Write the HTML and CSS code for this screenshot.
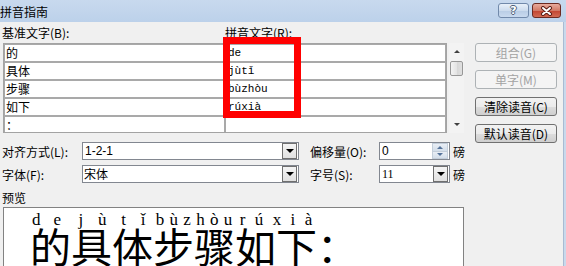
FILE: index.html
```html
<!DOCTYPE html>
<html lang="zh-CN">
<head>
    <meta charset="UTF-8">
    <title>拼音指南</title>
    <link rel="stylesheet" href="styles.css">
</head>
<body>
    <div class="window">
        <div class="titlebar">
            <span class="title">拼音指南</span>
            <div class="caption-buttons">
                <div class="cap-btn help"><span>?</span></div>
                <div class="cap-btn close">
                    <svg width="13" height="10" viewBox="0 0 13 10">
                        <path d="M3 2 L10 8 M10 2 L3 8" stroke="#5b1e17" stroke-width="4" stroke-linecap="round"/>
                        <path d="M3 2 L10 8 M10 2 L3 8" stroke="#ffffff" stroke-width="2" stroke-linecap="round"/>
                    </svg>
                </div>
            </div>
        </div>

        <div class="client">
            <div class="dialog">
                <div class="top">
                    <div class="labels">
                        <span class="lbl base-lbl">基准文字(B):</span>
                        <span class="lbl">拼音文字(R):</span>
                    </div>

                    <div class="table-wrap">
                        <div class="cells">
                            <div class="cell">的</div><div class="cell py">de</div>
                            <div class="cell">具体</div><div class="cell py">jùtǐ</div>
                            <div class="cell">步骤</div><div class="cell py">bùzhòu</div>
                            <div class="cell">如下</div><div class="cell py">rúxià</div>
                            <div class="cell last">：</div><div class="cell py last"></div>
                        </div>
                        <div class="scrollbar">
                            <div class="sb-btn"><span class="arrow-up"></span></div>
                            <div class="sb-thumb"></div>
                            <div class="sb-track"></div>
                            <div class="sb-btn"><span class="arrow-down"></span></div>
                        </div>
                    </div>

                    <div class="side-buttons">
                        <div class="btn disabled">组合(G)</div>
                        <div class="btn disabled">单字(M)</div>
                        <div class="btn">清除读音(C)</div>
                        <div class="btn">默认读音(D)</div>
                    </div>
                </div>

                <div class="form-row">
                    <span class="lbl field-lbl">对齐方式(L):</span>
                    <div class="combo wide">
                        <span class="combo-text">1-2-1</span>
                        <span class="drop"><span class="arrow-down"></span></span>
                    </div>
                    <span class="lbl field-lbl2">偏移量(O):</span>
                    <div class="combo small">
                        <span class="combo-text">0</span>
                        <span class="spin">
                            <span class="spin-half"><span class="spin-up"></span></span>
                            <span class="spin-half"><span class="spin-down"></span></span>
                        </span>
                    </div>
                    <span class="unit">磅</span>
                </div>

                <div class="form-row second">
                    <span class="lbl field-lbl">字体(F):</span>
                    <div class="combo wide">
                        <span class="combo-text cjk">宋体</span>
                        <span class="drop"><span class="arrow-down"></span></span>
                    </div>
                    <span class="lbl field-lbl2">字号(S):</span>
                    <div class="combo small">
                        <span class="combo-text serif">11</span>
                        <span class="drop"><span class="arrow-down"></span></span>
                    </div>
                    <span class="unit">磅</span>
                </div>

                <div class="preview-lbl">预览</div>
                <div class="preview">
                    <div class="ruby">
                        <div class="rt single"><span>d</span><span>e</span></div>
                        <div class="rb">的</div>
                    </div>
                    <div class="ruby">
                        <div class="rt"><span>j</span><span>ù</span><span>t</span><span>ǐ</span></div>
                        <div class="rb">具体</div>
                    </div>
                    <div class="ruby">
                        <div class="rt"><span>b</span><span>ù</span><span>z</span><span>h</span><span>ò</span><span>u</span></div>
                        <div class="rb">步骤</div>
                    </div>
                    <div class="ruby">
                        <div class="rt"><span>r</span><span>ú</span><span>x</span><span>i</span><span>à</span></div>
                        <div class="rb">如下</div>
                    </div>
                    <div class="ruby">
                        <div class="rt"></div>
                        <div class="rb">：</div>
                    </div>
                </div>
            </div>
            <div class="frame"></div>
        </div>

        <!-- red annotation box drawn over the pinyin column -->
        <div class="highlight"></div>
    </div>
</body>
</html>
```

FILE: styles.css
```css
body {
    margin: 0;
    font-family: "Noto Sans CJK SC", sans-serif;
    font-size: 12px;
    color: #000;
    background: #f0f0f0;
    overflow: hidden;
}
.window {
    position: relative;
    width: 566px;
    height: 266px;
    overflow: hidden;
}
.titlebar {
    height: 22px;
    display: flex;
    justify-content: space-between;
    background: linear-gradient(#c8d9ee, #bcd1ea);
}
.title {
    line-height: 22px;
    padding-top: 1px;
}
.caption-buttons {
    display: flex;
    gap: 3px;
    padding: 3px 5px 0 0;
}
.cap-btn {
    height: 13px;
    border-radius: 3px;
    display: flex;
    align-items: center;
    justify-content: center;
}
.help {
    width: 29px;
    border: 1px solid #7189aa;
    background: linear-gradient(#e8f0f9, #cddcee 50%, #b8cce5 51%, #c9daef);
}
.help span {
    font-family: "DejaVu Sans", sans-serif;
    font-weight: bold;
    font-size: 11px;
    line-height: 13px;
    color: #fff;
    text-shadow: 1px 0 0 #4d5f78, -1px 0 0 #4d5f78, 0 1px 0 #4d5f78, 0 -1px 0 #4d5f78;
}
.close {
    width: 27px;
    border: 1px solid #6b2a22;
    background: linear-gradient(#e8ab9d, #d27a67 50%, #c2432f 51%, #d16a52);
}
.client {
    display: flex;
    height: 244px;
}
.dialog {
    flex: 1;
    padding-left: 3px;
    overflow: hidden;
}
.frame {
    width: 2px;
    border-left: 1px solid #a9bbd2;
    background: #c9d9ec;
}
.top {
    display: grid;
    grid-template-columns: 461px 82px;
    grid-template-rows: 21px 90px;
    column-gap: 11px;
}
.labels {
    grid-column: 1 / 3;
    display: flex;
    line-height: 21px;
    margin-left: -1px;
}
.base-lbl {
    width: 223px;
}
.table-wrap {
    display: flex;
    gap: 2px;
}
.cells {
    width: 442px;
    border: 1px solid #a3a3a3;
    display: grid;
    grid-template-columns: 221px 221px;
    grid-template-rows: 18px 18px 18px 18px 16px;
    background: #fff;
    overflow: hidden;
}
.cell {
    border: 1px solid #a9a9a9;
    background: #fff;
    font-size: 12px;
    line-height: 16px;
    padding-left: 1px;
    white-space: nowrap;
}
.cell.last {
    border-bottom: none;
}
.cell.py {
    font-family: "Liberation Mono", monospace;
    font-size: 11px;
    padding-left: 2px;
}
.scrollbar {
    width: 15px;
    display: flex;
    flex-direction: column;
    background: #f3f3f3;
}
.sb-btn {
    height: 17px;
    display: flex;
    align-items: center;
    justify-content: center;
}
.sb-thumb {
    height: 13px;
    margin: 1px 1px 0;
    border: 1px solid #979797;
    border-radius: 2px;
    background: linear-gradient(90deg, #f3f3f3, #e4e4e4 50%, #d6d6d6 51%, #e0e0e0);
}
.sb-track {
    flex: 1;
}
.arrow-up {
    border-left: 3px solid transparent;
    border-right: 3px solid transparent;
    border-bottom: 3px solid #404040;
}
.arrow-down {
    border-left: 3px solid transparent;
    border-right: 3px solid transparent;
    border-top: 3px solid #404040;
}
.side-buttons {
    display: flex;
    flex-direction: column;
    gap: 8px;
    height: 90px;
}
.btn {
    flex: none;
    height: 17px;
    line-height: 17px;
    text-align: center;
    border: 1px solid #707070;
    border-radius: 3px;
    background: linear-gradient(#f2f2f2, #ebebeb 50%, #dddddd 51%, #cfcfcf);
}
.btn.disabled {
    color: #a3a3a3;
    border-color: #adb2b5;
    background: #f4f4f4;
}
.form-row {
    display: flex;
    align-items: center;
    margin-top: 9px;
    height: 18px;
}
.form-row.second {
    margin-top: 5px;
}
.field-lbl {
    width: 80px;
    margin-left: -1px;
}
.field-lbl2 {
    width: 69px;
    margin-left: 11px;
}
.combo {
    height: 16px;
    border: 1px solid #828790;
    background: #fff;
    display: flex;
    justify-content: space-between;
}
.combo.wide {
    width: 215px;
}
.combo.small {
    width: 69px;
}
.combo-text {
    font-family: "Liberation Sans", sans-serif;
    font-size: 12px;
    line-height: 16px;
    padding-left: 2px;
}
.combo-text.cjk {
    font-family: "Noto Sans CJK SC", sans-serif;
    padding-left: 1px;
}
.combo-text.serif {
    font-family: "Liberation Serif", serif;
}
.drop {
    width: 13px;
    height: 14px;
    margin: 0 1px 0 0;
    border: 1px solid #6f6f6f;
    background: linear-gradient(#f4f4f4, #e1e1e1);
    display: flex;
    align-items: center;
    justify-content: center;
}
.drop .arrow-down {
    border-left-width: 4px;
    border-right-width: 4px;
    border-top: 4px solid #000;
}
.spin {
    width: 16px;
    display: flex;
    flex-direction: column;
    margin-right: 1px;
}
.spin-half {
    flex: 1;
    display: flex;
    align-items: center;
    justify-content: center;
    background: linear-gradient(#e9eef5, #d3deea);
    border: 1px solid #c3ceda;
}
.spin-half + .spin-half {
    border-top: none;
}
.spin-up {
    border-left: 3px solid transparent;
    border-right: 3px solid transparent;
    border-bottom: 3px solid #55739a;
}
.spin-down {
    border-left: 3px solid transparent;
    border-right: 3px solid transparent;
    border-top: 3px solid #55739a;
}
.unit {
    margin-left: 3px;
}
.preview-lbl {
    padding-top: 6px;
    line-height: 18px;
    margin-left: -1px;
}
.preview {
    width: 461px;
    height: 80px;
    box-sizing: border-box;
    border: 1px solid #828282;
    background: #fff;
    display: flex;
    padding-left: 26px;
}
.ruby {
    display: flex;
    flex-direction: column;
}
.rt {
    display: flex;
    justify-content: space-around;
    height: 14px;
    margin-top: 5px;
    font-family: "Liberation Serif", serif;
    font-size: 17px;
    line-height: 14px;
}
.rt.single {
    justify-content: flex-start;
    gap: 13px;
    padding-left: 2px;
}
.rb {
    font-size: 41px;
    line-height: 37px;
    white-space: nowrap;
}
.highlight {
    position: absolute;
    left: 223px;
    top: 37px;
    width: 64px;
    height: 67px;
    border: 7px solid #ff0000;
}
```
